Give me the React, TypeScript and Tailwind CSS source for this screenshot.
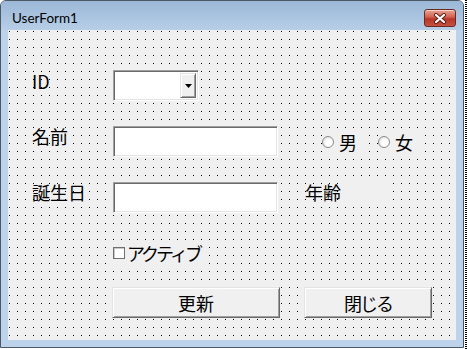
import React from 'react';

const jp = "font-['MS_UI_Gothic','Noto_Sans_CJK_JP',sans-serif]";

function Sunken({ className = '', children }: { className?: string; children?: React.ReactNode }) {
  return (
    <div
      className={`relative border border-t-[#a0a0a0] border-l-[#a0a0a0] border-r-white border-b-white bg-white shadow-[inset_1px_1px_0_#696969,inset_-1px_-1px_0_#e3e3e3] ${className}`}
    >
      {children}
    </div>
  );
}

function Button({ label, className = '', tight = false }: { label: string; className?: string; tight?: boolean }) {
  return (
    <div
      className={`flex h-[31px] items-center justify-center border border-t-[#e3e3e3] border-l-[#e3e3e3] border-r-[#696969] border-b-[#696969] bg-[#f0f0f0] shadow-[inset_1px_1px_0_#fff,inset_-1px_-1px_0_#a0a0a0] ${className}`}
    >
      <span className={`${jp} text-[18px] leading-none text-black ${tight ? 'tracking-[-2px]' : ''}`}>{label}</span>
    </div>
  );
}

function Radio({ label }: { label: string }) {
  return (
    <div className="flex h-[24px] items-center gap-[5px] bg-[#f0f0f0] pr-[6px]">
      <span className="h-[12px] w-[12px] rounded-full border border-[#8c8c8c] bg-[radial-gradient(circle_at_60%_60%,#ffffff_35%,#d4d4d4_100%)]" />
      <span className={`${jp} text-[18px] leading-none text-black`}>{label}</span>
    </div>
  );
}

export default function App() {
  return (
    <div className="flex h-[349px] w-[467px] bg-white">
      {/* window */}
      <div className="flex h-[348px] w-[464px] flex-col overflow-hidden rounded-t-[6px] border border-[#4d5866] bg-[#bcd3eb]">
        {/* title bar */}
        <div className="flex h-[29px] shrink-0 items-start justify-between bg-[linear-gradient(#9bb8d7,#b7cee7)] pl-[11px] pr-[7px]">
          <span className="mt-[9px] font-['Lato',sans-serif] text-[13.5px] leading-[16px] text-black">UserForm1</span>
          <div className="mt-[8px] flex h-[18px] w-[32px] items-center justify-center rounded-[3px] border border-[#6e2a22] bg-[linear-gradient(#e8a596,#d0604f_45%,#b5372a_55%,#c5513f)] shadow-[inset_0_1px_0_rgba(255,255,255,0.5)]">
            <svg width="14" height="11" viewBox="0 0 14 11">
              <path d="M3 2 L11 9 M11 2 L3 9" stroke="#5b1d16" strokeWidth="4" strokeLinecap="round" />
              <path d="M3 2 L11 9 M11 2 L3 9" stroke="#ffffff" strokeWidth="2.2" strokeLinecap="round" />
            </svg>
          </div>
        </div>

        {/* frame + client */}
        <div className="flex flex-1 px-[7px] pb-[7px]">
          <div className="flex h-[310px] w-[449px] flex-col bg-black bg-[image:linear-gradient(90deg,transparent_1px,#f0f0f0_1px),linear-gradient(transparent_1px,#f0f0f0_1px)] bg-[length:8px_8px] bg-[position:1px_1px] pl-[24px]">
            {/* ID */}
            <div className="mt-[40px] flex h-[31px] items-start">
              <span className={`${jp} w-[81px] pt-[2px] text-[18px] leading-[18px] text-black`}>ID</span>
              <Sunken className="flex h-[31px] w-[86px] justify-end p-[2px]">
                <div className="flex h-full w-[16px] items-center justify-center border border-t-[#e3e3e3] border-l-[#e3e3e3] border-r-[#696969] border-b-[#696969] bg-[#f0f0f0] shadow-[inset_1px_1px_0_#fff,inset_-1px_-1px_0_#a0a0a0]">
                  <svg width="7" height="4" viewBox="0 0 7 4">
                    <path d="M0 0 H7 L3.5 4 Z" fill="#000" />
                  </svg>
                </div>
              </Sunken>
            </div>

            {/* 名前 */}
            <div className="mt-[25px] flex h-[31px] items-start">
              <span className={`${jp} w-[81px] pt-[1px] text-[18px] leading-[18px] text-black`}>名前</span>
              <Sunken className="h-[31px] w-[165px]" />
              <div className="ml-[40px] flex h-[31px] items-center gap-[15px]">
                <div className="pl-[4px]">
                  <Radio label="男" />
                </div>
                <Radio label="女" />
              </div>
            </div>

            {/* 誕生日 */}
            <div className="mt-[25px] flex h-[31px] items-start">
              <span className={`${jp} w-[81px] pt-[1px] text-[18px] leading-[18px] text-black`}>誕生日</span>
              <Sunken className="h-[31px] w-[165px]" />
              <span className={`${jp} ml-[27px] pt-[1px] text-[18px] leading-[18px] text-black`}>年齢</span>
              <div className="-mt-[4px] ml-[2px] h-[25px] w-[45px] bg-[#f0f0f0]" />
            </div>

            {/* アクティブ */}
            <div className="mt-[30px] flex h-[20px] items-center pl-[81px]">
              <div className="flex h-[22px] items-center gap-[2px] bg-[#f0f0f0] pr-[4px]">
                <span className="h-[12px] w-[12px] border border-[#707070] bg-white shadow-[inset_1px_1px_0_#c8c8c8]" />
                <span className={`${jp} text-[18px] leading-none tracking-[-3px] text-black`}>アクティブ</span>
              </div>
            </div>

            {/* buttons */}
            <div className="mt-[24px] flex items-start pl-[80px]">
              <Button label="更新" className="w-[168px]" />
              <Button label="閉じる" className="ml-[24px] w-[128px]" tight />
            </div>
          </div>
        </div>
      </div>
      {/* designer selection edge */}
      <div className="ml-[1px] h-full w-[2px] bg-[image:linear-gradient(#000_50%,#fff_50%)] bg-[length:2px_2px]" />
    </div>
  );
}
